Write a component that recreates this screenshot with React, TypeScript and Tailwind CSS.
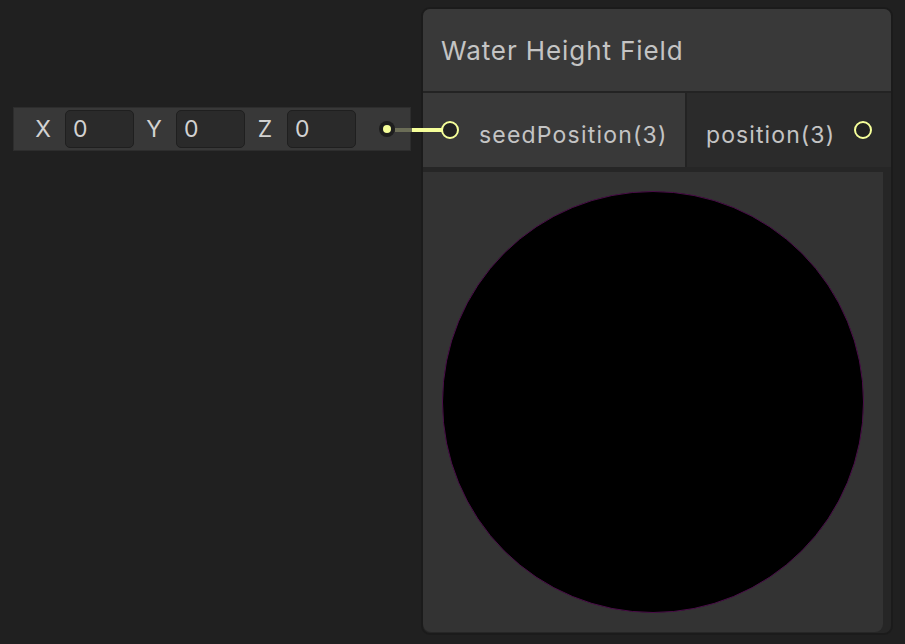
const FONT = "font-['Inter','Noto_Sans',sans-serif]";

function VectorField({ label }: { label: string }) {
  return (
    <div className="flex items-center">
      <span className="w-[40px] text-center text-[23px] leading-none text-[#d2d2d2]">{label}</span>
      <div className="ml-[2px] flex h-[38px] w-[69px] items-center rounded-[5px] border border-[#1f1f1f] bg-[#2a2a2a] pl-[7px] text-[23px] leading-none tracking-[1px] text-[#d2d2d2]">
        0
      </div>
    </div>
  );
}

function PortRing() {
  return <div className="h-[18px] w-[18px] shrink-0 rounded-full border-2 border-[#f6ff9a] bg-[#222222]" />;
}

export default function App() {
  return (
    <div className={`relative h-[644px] w-[905px] overflow-hidden bg-[#202020] ${FONT}`}>
      {/* Vector3 input node */}
      <div className="absolute left-[13px] top-[107px] flex h-[44px] w-[398px] items-center border border-[#2d2d2d] bg-[#383838] pl-[9px]">
        <VectorField label="X" />
        <VectorField label="Y" />
        <VectorField label="Z" />
        <div className="ml-auto mr-[15px] flex h-[16px] w-[16px] items-center justify-center rounded-full bg-[#1e1e1e]">
          <div className="h-[8px] w-[8px] rounded-full bg-[#f6ff9a]" />
        </div>
      </div>

      {/* Water Height Field node */}
      <div className="absolute left-[421px] top-[7px] flex h-[628px] w-[472px] flex-col overflow-hidden rounded-[9px] border-2 border-[#1b1b1b] bg-[#262626]">
        <div className="flex h-[82px] shrink-0 items-center bg-[#393939] pl-[18px] text-[26px] tracking-[0.9px] text-[#c4c4c4]">
          Water Height Field
        </div>
        <div className="h-[2px] shrink-0 bg-[#232323]" />
        <div className="flex h-[74px] shrink-0">
          <div className="flex w-[262px] items-center bg-[#393939] pl-[18px] text-[23px] tracking-[1.2px] text-[#c4c4c4]">
            <PortRing />
            <span className="ml-[20px] pt-[10px]">seedPosition(3)</span>
          </div>
          <div className="w-[2px] bg-[#232323]" />
          <div className="flex flex-1 items-center justify-between bg-[#2b2b2b] pl-[19px] pr-[19px] text-[23px] tracking-[1.1px] text-[#c4c4c4]">
            <span className="pt-[10px]">position(3)</span>
            <PortRing />
          </div>
        </div>
        <div className="mt-[5px] flex h-[460px] w-[460px] items-center justify-center rounded-b-[8px] bg-[#333333]">
          <div className="h-[422px] w-[422px] rounded-full border border-[#4a0d48] bg-black" />
        </div>
      </div>

      {/* Wire */}
      <svg className="absolute left-[395px] top-[122px] z-10" width="47" height="16">
        <line x1="0" y1="8" x2="17" y2="8" stroke="#6b6d57" strokeWidth="4" />
        <line x1="17" y1="8" x2="47" y2="8" stroke="#f6ff9a" strokeWidth="4" />
      </svg>
    </div>
  );
}
